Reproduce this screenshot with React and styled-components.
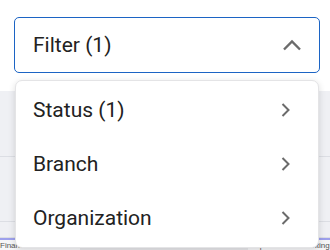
import React from "react";
import styled, { createGlobalStyle } from "styled-components";

const Global = createGlobalStyle`
  body {
    margin: 0;
    background: #fff;
    font-family: Roboto, "Liberation Sans", sans-serif;
  }
`;

const Page = styled.div`
  position: relative;
  width: 330px;
  height: 250px;
  overflow: hidden;
  display: flex;
  flex-direction: column;
`;

const FilterArea = styled.div`
  height: 92px;
  padding: 17px 10px 0 14px;
  box-sizing: border-box;
  background: #fff;
`;

const FilterButton = styled.div`
  width: 306px;
  height: 56px;
  box-sizing: border-box;
  border: 1px solid #1c64c4;
  border-radius: 5px;
  display: flex;
  align-items: center;
  justify-content: space-between;
  padding: 0 17px 0 18px;
  font-size: 21px;
  color: #222;
`;

const Table = styled.div`
  flex: 1;
  display: flex;
  flex-direction: column;
  background: #eff0f4;
`;

const TableRow = styled.div`
  height: ${(p) => p.h}px;
  border-bottom: 1px solid #dcdee4;
  flex-shrink: 0;
`;

const Accent = styled.div`
  height: 2px;
  background: #9da0ec;
`;

const FootRow = styled.div`
  flex: 1;
  display: grid;
  grid-template-columns: 80px 1fr 82px;
  background: #f6f6f8;
  font-family: "Liberation Sans", Arial, sans-serif;
  font-size: 8px;
  line-height: 9px;
  color: #555;
`;

const Cell = styled.div`
  padding: 1px 0 0 ${(p) => p.pl || 0}px;
  background: ${(p) => (p.shade ? "#e6e6e9" : "transparent")};
  white-space: nowrap;
  overflow: hidden;
`;

const Menu = styled.div`
  position: absolute;
  top: 80px;
  left: 15px;
  width: 304px;
  padding: 2px 0;
  background: #fff;
  border: 1px solid #e4e4e6;
  border-radius: 7px;
  box-sizing: border-box;
  box-shadow: 0 2px 7px rgba(0, 0, 0, 0.14);
`;

const Item = styled.div`
  height: 54px;
  display: flex;
  align-items: center;
  justify-content: space-between;
  padding: 0 28px 0 17px;
  font-size: 21px;
  color: #222;
`;

const ChevronUp = () => (
  <svg width="20" height="12" viewBox="0 0 20 12">
    <polyline points="2,10.5 10,2.5 18,10.5" fill="none" stroke="#6b6b6b" strokeWidth="2.4" />
  </svg>
);

const ChevronRight = () => (
  <svg width="9" height="16" viewBox="0 0 9 16">
    <polyline points="1.5,2 7.5,8 1.5,14" fill="none" stroke="#6b6b6b" strokeWidth="2" />
  </svg>
);

const items = ["Status (1)", "Branch", "Organization"];

const App = () => {
  return (
    <Page>
      <Global />
      <FilterArea>
        <FilterButton>
          <span>Filter (1)</span>
          <ChevronUp />
        </FilterButton>
      </FilterArea>
      <Table>
        <TableRow h={65} />
        <TableRow h={64} />
        <TableRow h={15} />
        <Accent />
        <FootRow>
          <Cell pl={0}>Finance</Cell>
          <Cell shade />
          <Cell pl={2}>Supervisor Accounting</Cell>
        </FootRow>
      </Table>
      <Menu>
        {items.map((t) => (
          <Item key={t}>
            <span>{t}</span>
            <ChevronRight />
          </Item>
        ))}
      </Menu>
    </Page>
  );
};

export default App;
